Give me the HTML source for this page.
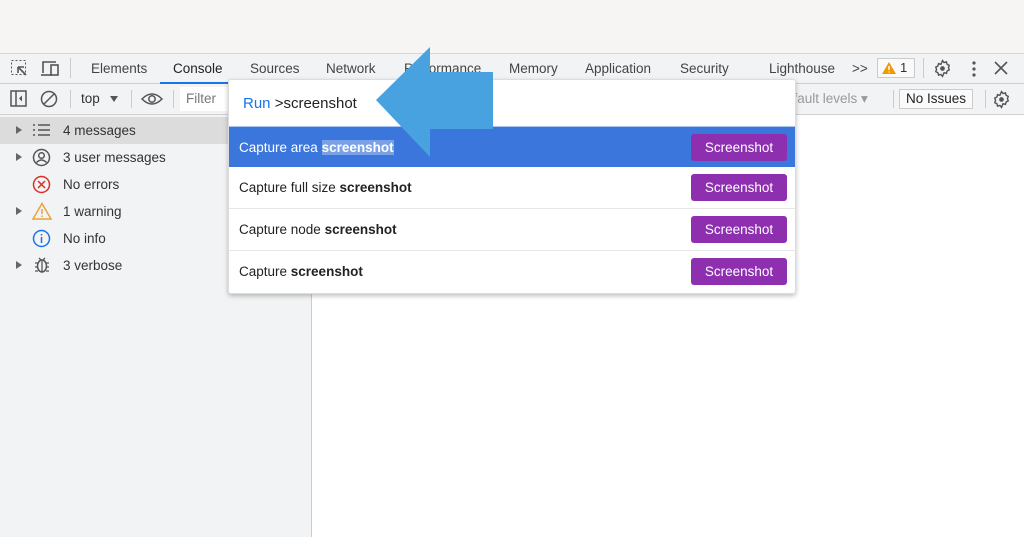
<!DOCTYPE html>
<html><head><meta charset="utf-8"><style>
*{margin:0;padding:0;box-sizing:border-box}
body{width:1024px;height:537px;overflow:hidden;position:relative;font-family:"Liberation Sans",sans-serif;background:#fff;color:#333}
.a{position:absolute}
.t{position:absolute;font-size:13.5px;color:#444;top:61px}
.s{position:absolute;left:63px;font-size:13.5px;color:#333}
.tri{position:absolute;left:16px;width:0;height:0;border-left:6px solid #666;border-top:4px solid transparent;border-bottom:4px solid transparent}
.row{position:absolute;left:0;width:568px;height:41px;border-top:1px solid #e6e6e6;font-size:13.5px;color:#222}
.row span.l{position:absolute;left:10px;top:13px}
.btn{position:absolute;left:462px;top:7px;width:96px;height:27px;background:#8e2fb0;color:#fff;border-radius:3px;font-size:13.5px;text-align:center;line-height:27px}
</style></head><body>
<div class="a" style="left:0;top:0;width:1024px;height:53px;background:#f6f5f3"></div>
<div class="a" style="left:0;top:53px;width:1024px;height:31px;background:#f1f3f4;border-top:1px solid #d6d6d6;border-bottom:1px solid #d0d0d0"></div>
<div class="a" style="left:0;top:84px;width:1024px;height:31px;background:#f1f3f4;border-bottom:1px solid #d0d0d0"></div>
<div class="a" style="left:0;top:115px;width:312px;height:422px;background:#f1f3f4;border-right:1px solid #ccc"></div>
<div class="a" style="left:0;top:117px;width:312px;height:27px;background:#dcdcdc"></div>
<!-- tab icons -->
<svg class="a" style="left:10px;top:59px" width="20" height="20"><rect x="1.5" y="1.5" width="14" height="14" fill="none" stroke="#555" stroke-dasharray="2 2"/><path d="M8 8 L16 16 M8 8 L8 14 M8 8 L14 8" stroke="#555" stroke-width="1.6" fill="none"/></svg>
<svg class="a" style="left:40px;top:59px" width="22" height="20"><path d="M3 14V3h13" stroke="#555" stroke-width="1.6" fill="none"/><rect x="11" y="6" width="7" height="10" fill="none" stroke="#555" stroke-width="1.6"/><path d="M1 16h11" stroke="#555" stroke-width="1.6"/></svg>
<div class="a" style="left:70px;top:58px;width:1px;height:20px;background:#ccc"></div>
<div class="t" style="left:91px">Elements</div>
<div class="t" style="left:173px;color:#222">Console</div>
<div class="a" style="left:160px;top:82px;width:68px;height:2px;background:#1a73e8"></div>
<div class="t" style="left:250px">Sources</div>
<div class="t" style="left:326px">Network</div>
<div class="t" style="left:404px">Performance</div>
<div class="t" style="left:509px">Memory</div>
<div class="t" style="left:585px">Application</div>
<div class="t" style="left:680px">Security</div>
<div class="t" style="left:769px">Lighthouse</div>
<div class="t" style="left:852px">&gt;&gt;</div>
<div class="a" style="left:877px;top:58px;width:38px;height:20px;border:1px solid #ccc;background:#fafafa;font-size:13px;line-height:18px;padding-left:22px;color:#333">1</div>
<svg class="a" style="left:881px;top:61px" width="16" height="14"><path d="M8 1L15 13H1Z" fill="#f29900"/><path d="M8 5v4M8 10.5v1" stroke="#fff" stroke-width="1.5"/></svg>
<div class="a" style="left:923px;top:58px;width:1px;height:20px;background:#ccc"></div>
<svg class="a" style="left:933px;top:59px" width="19" height="19" viewBox="0 0 24 24"><path d="M12 2l2 2.5 3-.8.8 3 2.7 1.3-1 2.9 1 2.9-2.7 1.3-.8 3-3-.8L12 22l-2-2.5-3 .8-.8-3L3.5 16l1-2.9-1-2.9L6.2 8.9l.8-3 3 .8z" fill="none" stroke="#555" stroke-width="1.8"/><circle cx="12" cy="12" r="3" fill="#555"/></svg>
<svg class="a" style="left:971px;top:60px" width="6" height="18"><circle cx="3" cy="3" r="1.6" fill="#555"/><circle cx="3" cy="9" r="1.6" fill="#555"/><circle cx="3" cy="15" r="1.6" fill="#555"/></svg>
<svg class="a" style="left:994px;top:61px" width="14" height="14"><path d="M1 1L13 13M13 1L1 13" stroke="#555" stroke-width="1.6"/></svg>
<!-- toolbar -->
<svg class="a" style="left:10px;top:90px" width="18" height="18"><rect x="1" y="1" width="15" height="15" fill="none" stroke="#555" stroke-width="1.5"/><path d="M6 1v15" stroke="#555" stroke-width="1.5"/><path d="M12 5.5L9 8.5l3 3z" fill="#555"/></svg>
<svg class="a" style="left:40px;top:90px" width="18" height="18"><circle cx="9" cy="9" r="7.5" fill="none" stroke="#555" stroke-width="1.5"/><path d="M4 14L14 4" stroke="#555" stroke-width="1.5"/></svg>
<div class="a" style="left:70px;top:90px;width:1px;height:18px;background:#ccc"></div>
<div class="a" style="left:81px;top:91px;font-size:13.5px;color:#333">top</div>
<div class="a" style="left:110px;top:96px;border-top:6px solid #555;border-left:4px solid transparent;border-right:4px solid transparent"></div>
<div class="a" style="left:131px;top:90px;width:1px;height:18px;background:#ccc"></div>
<svg class="a" style="left:141px;top:91px" width="22" height="16"><path d="M1 8Q11 -2 21 8Q11 18 1 8Z" fill="none" stroke="#555" stroke-width="1.5"/><circle cx="11" cy="8" r="3.2" fill="none" stroke="#555" stroke-width="1.5"/></svg>
<div class="a" style="left:173px;top:90px;width:1px;height:18px;background:#ccc"></div>
<div class="a" style="left:180px;top:87px;width:60px;height:24px;background:#fff;font-size:13.5px;color:#777;padding:4px 6px">Filter</div>
<div class="a" style="left:786px;top:91px;font-size:13.5px;color:#999">efault levels ▾</div>
<div class="a" style="left:893px;top:90px;width:1px;height:18px;background:#ccc"></div>
<div class="a" style="left:899px;top:89px;width:74px;height:20px;border:1px solid #ccc;background:#fafafa;font-size:13.5px;color:#222;text-align:center;line-height:18px">No Issues</div>
<div class="a" style="left:985px;top:90px;width:1px;height:18px;background:#ccc"></div>
<svg class="a" style="left:992px;top:90px" width="19" height="19" viewBox="0 0 24 24"><path d="M12 2l2 2.5 3-.8.8 3 2.7 1.3-1 2.9 1 2.9-2.7 1.3-.8 3-3-.8L12 22l-2-2.5-3 .8-.8-3L3.5 16l1-2.9-1-2.9L6.2 8.9l.8-3 3 .8z" fill="none" stroke="#555" stroke-width="1.8"/><circle cx="12" cy="12" r="3" fill="#555"/></svg>
<!-- sidebar -->
<div class="tri" style="top:126px"></div>
<svg class="a" style="left:32px;top:123px" width="18" height="14"><path d="M6 2h12M6 7h12M6 12h12" stroke="#555" stroke-width="1.5"/><path d="M1 2h2M1 7h2M1 12h2" stroke="#555" stroke-width="1.5"/></svg>
<div class="s" style="top:123px">4 messages</div>
<div class="tri" style="top:153px"></div>
<svg class="a" style="left:32px;top:148px" width="19" height="19"><circle cx="9.5" cy="9.5" r="8" fill="none" stroke="#555" stroke-width="1.5"/><circle cx="9.5" cy="7.5" r="2.8" fill="none" stroke="#555" stroke-width="1.5"/><path d="M4.5 14.5Q9.5 9.5 14.5 14.5" fill="none" stroke="#555" stroke-width="1.5"/></svg>
<div class="s" style="top:150px">3 user messages</div>
<svg class="a" style="left:32px;top:175px" width="19" height="19"><circle cx="9.5" cy="9.5" r="8" fill="none" stroke="#d93025" stroke-width="1.5"/><path d="M6 6l7 7M13 6l-7 7" stroke="#d93025" stroke-width="1.5"/></svg>
<div class="s" style="top:177px">No errors</div>
<div class="tri" style="top:207px"></div>
<svg class="a" style="left:32px;top:202px" width="20" height="18"><path d="M10 1.5L19 17H1Z" fill="none" stroke="#e8a33d" stroke-width="1.5"/><path d="M10 7v5M10 13.5v1.5" stroke="#e8a33d" stroke-width="1.5"/></svg>
<div class="s" style="top:204px">1 warning</div>
<svg class="a" style="left:32px;top:229px" width="19" height="19"><circle cx="9.5" cy="9.5" r="8" fill="none" stroke="#1a73e8" stroke-width="1.5"/><path d="M9.5 8v6M9.5 5v1.5" stroke="#1a73e8" stroke-width="1.5"/></svg>
<div class="s" style="top:231px">No info</div>
<div class="tri" style="top:261px"></div>
<svg class="a" style="left:34px;top:256px" width="16" height="18"><ellipse cx="8" cy="10" rx="4.5" ry="6" fill="none" stroke="#555" stroke-width="1.5"/><path d="M1 7h3M12 7h3M1 11h3M12 11h3M1 15h3M12 15h3M8 5v11M5 2l2 2M11 2l-2 2" stroke="#555" stroke-width="1.3"/></svg>
<div class="s" style="top:258px">3 verbose</div>
<!-- popup -->
<div class="a" style="left:228px;top:79px;width:568px;height:215px;background:#fff;border:1px solid #ddd;box-shadow:0 2px 5px rgba(0,0,0,.25);border-radius:3px;overflow:hidden">
 <div class="a" style="left:14px;top:15px;font-size:15px;color:#222"><span style="color:#1a73e8">Run</span> &gt;screenshot</div>
 <div class="row" style="top:46px;height:41px;background:#3b76dc;border-top:1px solid #a8c3f0;color:#fff"><span class="l">Capture area <b style="background:#7aa1e6">screenshot</b></span><div class="btn">Screenshot</div></div>
 <div class="row" style="top:87px;border-top:none"><span class="l">Capture full size <b>screenshot</b></span><div class="btn">Screenshot</div></div>
 <div class="row" style="top:128px"><span class="l">Capture node <b>screenshot</b></span><div class="btn">Screenshot</div></div>
 <div class="row" style="top:170px"><span class="l">Capture <b>screenshot</b></span><div class="btn">Screenshot</div></div>
</div>
<!-- arrow -->
<svg class="a" style="left:0;top:0" width="1024" height="537"><path d="M376 100L430 47V72H493V129H430V157Z" fill="#48a2e0"/></svg>
</body></html>
